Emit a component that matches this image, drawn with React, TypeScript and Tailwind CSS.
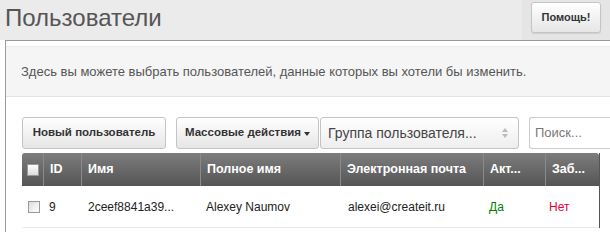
export default function App() {
  const cols = [
    { label: "ID", w: "w-[38px]" },
    { label: "Имя", w: "w-[119px]" },
    { label: "Полное имя", w: "w-[140px]" },
    { label: "Электронная почта", w: "w-[143px]" },
    { label: "Акт...", w: "w-[62px]" },
    { label: "Заб...", w: "flex-1" },
  ];

  return (
    <div className="h-[232px] w-[610px] overflow-hidden bg-white font-['Liberation_Sans',Arial,sans-serif]">
      {/* header */}
      <div className="flex h-[40px] bg-[#ebebeb]">
        <h1 className="flex-1 pl-[5px] pt-[4px] text-[24px] leading-[28px] text-[#555]">
          Пользователи
        </h1>
        <div className="flex w-[88px] items-start justify-center bg-[#e5e5e5] pt-[2px]">
          <button className="h-[31px] w-[70px] rounded-[3px] border border-[#c4c4c4] bg-gradient-to-b from-white to-[#e6e6e6] text-[11px] font-bold text-[#333] shadow-[0_1px_1px_rgba(0,0,0,0.1)]">
            Помощь!
          </button>
        </div>
      </div>

      {/* panel */}
      <div className="ml-[5px] h-[192px] border-l border-t border-[#999]">
        <div className="mt-[5px] flex h-[51px] items-center border-b border-[#e3e3e3] border-t border-t-[#ececec] bg-[#f5f5f5] pl-[15px] text-[13px] text-[#555]">
          Здесь вы можете выбрать пользователей, данные которых вы хотели бы изменить.
        </div>

        <div className="flex items-center pl-[16px] pt-[20px]">
          <button className="h-[32px] w-[144px] rounded-[3px] border border-[#c4c4c4] bg-gradient-to-b from-white to-[#e6e6e6] text-[11.5px] font-bold text-[#333]">
            Новый пользователь
          </button>
          <button className="ml-[10px] flex h-[32px] w-[143px] items-center justify-center gap-[3px] rounded-[3px] border border-[#c4c4c4] bg-gradient-to-b from-white to-[#e6e6e6] text-[11.5px] font-bold text-[#333]">
            Массовые действия
            <span className="mt-[2px] border-l-[3px] border-r-[3px] border-t-[4px] border-l-transparent border-r-transparent border-t-[#333]" />
          </button>
          <div className="ml-[1px] flex h-[32px] w-[199px] items-center justify-between rounded-[3px] border border-[#c4c4c4] bg-gradient-to-b from-white to-[#eee] pl-[7px] pr-[10px] text-[14px] text-[#444]">
            <span>Группа пользователя...</span>
            <span className="flex flex-col gap-[2px]">
              <span className="border-b-[4px] border-l-[3px] border-r-[3px] border-b-[#bbb] border-l-transparent border-r-transparent" />
              <span className="border-t-[4px] border-l-[3px] border-r-[3px] border-t-[#bbb] border-l-transparent border-r-transparent" />
            </span>
          </div>
          <div className="ml-[10px] h-[32px] flex-1 rounded-l-[3px] border border-r-0 border-[#ccc] bg-white pl-[5px] pt-[5px] text-[13px] text-[#777]">
            Поиск...
          </div>
        </div>

        {/* table */}
        <div className="ml-[16px] mt-[4px] w-[578px] border-r border-[#555]">
          <div className="flex h-[33px] rounded-tl-[3px] rounded-tr-[3px] bg-gradient-to-b from-[#7d7d7d] to-[#555] text-[12.5px] font-bold text-white">
            <div className="flex w-[22px] items-center justify-center border-r border-[#8a8a8a]">
              <span className="h-[12px] w-[12px] border border-[#999] bg-gradient-to-b from-white to-[#ddd]" />
            </div>
            {cols.map((c) => (
              <div
                key={c.label}
                className={`${c.w} flex items-center border-r border-[#8a8a8a] pl-[6px] last:border-r-0`}
              >
                {c.label}
              </div>
            ))}
          </div>
          <div className="flex h-[42px] items-center border-b border-[#e8e8e8] border-l border-l-white text-[12px] text-[#222]">
            <div className="flex w-[22px] justify-center">
              <span className="h-[12px] w-[12px] border border-[#999] bg-gradient-to-br from-[#ddd] to-white" />
            </div>
            <div className="w-[38px] pl-[4px]">9</div>
            <div className="w-[119px] pl-[5px]">2ceef8841a39...</div>
            <div className="w-[140px] pl-[4px]">Alexey Naumov</div>
            <div className="w-[143px] pl-[6px]">alexei@createit.ru</div>
            <div className="w-[62px] pl-[4px] text-[#008000]">Да</div>
            <div className="flex-1 pl-[2px] text-[#e8003a]">Нет</div>
          </div>
        </div>
      </div>
    </div>
  );
}
